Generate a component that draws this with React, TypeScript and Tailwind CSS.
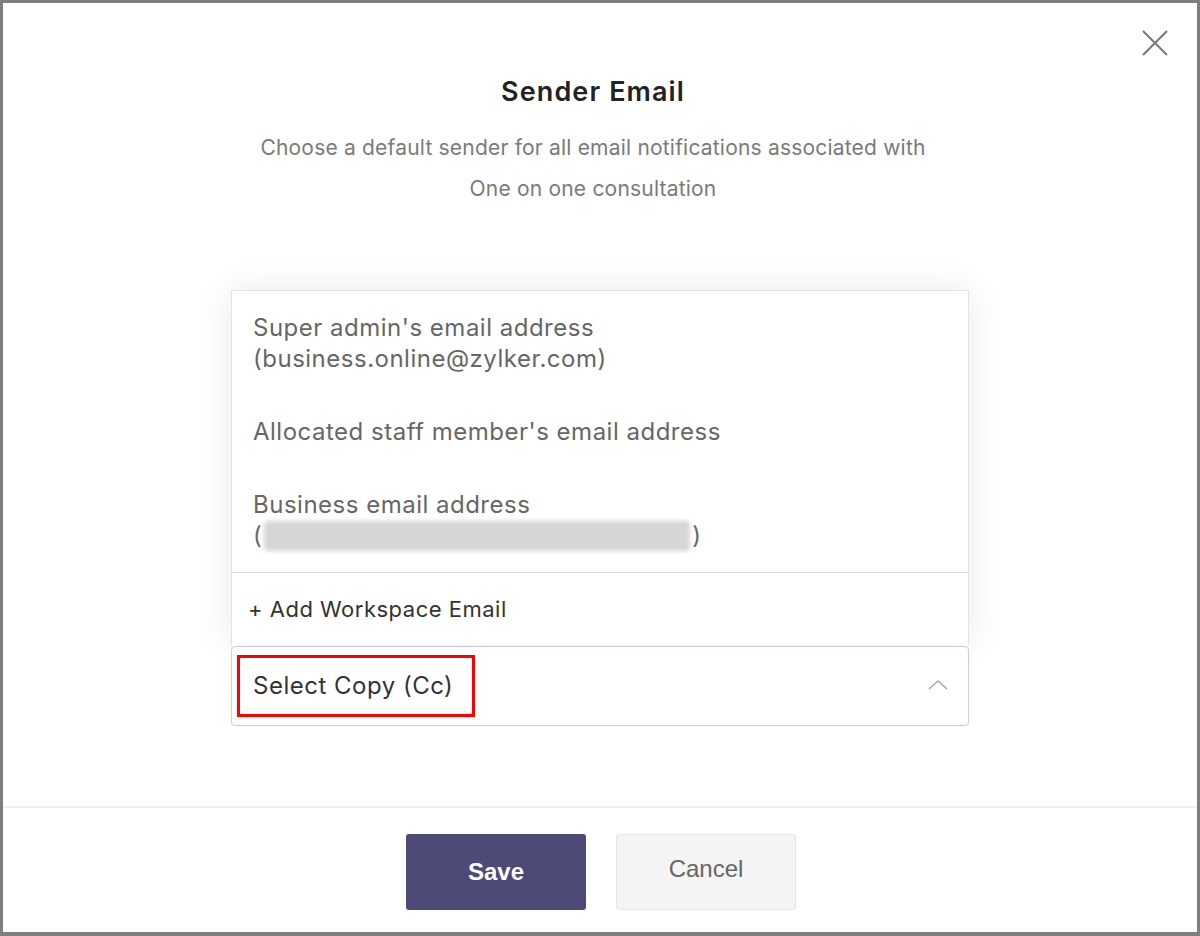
import { useState } from "react"

const options = [
  { id: "admin", label: "Super admin's email address", sub: "(business.online@zylker.com)" },
  { id: "staff", label: "Allocated staff member's email address" },
  { id: "business", label: "Business email address", blurred: true },
]

export default function App() {
  const [open] = useState(true)

  return (
    <div
      className="w-[1200px] h-[936px] bg-white border-[#7f7f7f] border-t-[3px] border-l-[3px] border-r-[3px] border-b-[4px] flex flex-col relative"
      style={{ fontFamily: "Inter, 'Open Sans', sans-serif" }}
    >
      {/* Close */}
      <button className="absolute top-[27px] right-[29px] w-[26px] h-[26px] text-[#777]">
        <svg viewBox="0 0 26 26" width="26" height="26" fill="none" stroke="currentColor" strokeWidth="2">
          <path d="M1 1L25 25M25 1L1 25" />
        </svg>
      </button>

      {/* Body */}
      <div className="flex-1 flex flex-col items-center pt-[73px]">
        <h1 className="text-[27px] leading-[32px] font-semibold text-[#222] tracking-[1.1px] pr-[14px]">Sender Email</h1>
        <p className="mt-[19px] text-[21px] leading-[41px] text-[#7a7a7a] text-center tracking-[0.2px] pr-[14px]">
          Choose a default sender for all email notifications associated with
          <br />
          One on one consultation
        </p>

        <div className="mt-[81px] w-[738px]">
          {open && (
            <div className="border border-[#e2e2e2] border-b-0 bg-white shadow-[0_0_34px_rgba(0,0,0,0.09)]">
              <div className="border-b border-[#e2e2e2]">
                {options.map((o) => (
                  <div key={o.id} className="px-[21px] py-[21px] text-[24px] leading-[31px] text-[#666] tracking-[0.5px]">
                    <div>{o.label}</div>
                    {o.sub && <div>{o.sub}</div>}
                    {o.blurred && (
                      <div className="flex items-center">
                        <span>(</span>
                        <span className="inline-block w-[426px] h-[30px] bg-[#d6d6d6] blur-[2px] rounded-[4px] mx-[2px]" />
                        <span>)</span>
                      </div>
                    )}
                  </div>
                ))}
              </div>
              <div className="px-[16px] py-[21px] text-[22px] leading-[30px] text-[#333] tracking-[0.5px]">+ Add Workspace Email</div>
            </div>
          )}

          <div className="mt-[1px] border-[1.5px] border-[#cbcaf0] rounded-[4px] bg-white flex items-center justify-between pl-[5px] pr-[20px] py-[8px]">
            <div className="border-[3px] border-[#ff0000] w-[238px] h-[62px] px-[13px] flex items-center text-[24px] text-[#333] tracking-[0.5px]">
              Select Copy (Cc)
            </div>
            <svg width="20" height="11" viewBox="0 0 20 11" fill="none" stroke="#aaa" strokeWidth="1.6" className="mb-[4px]">
              <path d="M1 10L10 2L19 10" />
            </svg>
          </div>
        </div>
      </div>

      {/* Footer */}
      <div className="border-t-2 border-[#efefef] h-[126px] flex justify-center gap-[30px] pt-[26px] pl-[2px]">
        <button className="w-[180px] h-[76px] bg-[#4d4a78] rounded-[3px] text-white text-[24px] font-bold" style={{ fontFamily: "'Liberation Sans', Arial, sans-serif" }}>
          Save
        </button>
        <button className="w-[180px] h-[76px] bg-[#f4f4f4] border border-[#e6e6e6] rounded-[3px] text-[#666] text-[24px] pb-[6px]" style={{ fontFamily: "'Liberation Sans', Arial, sans-serif" }}>
          Cancel
        </button>
      </div>
    </div>
  )
}
